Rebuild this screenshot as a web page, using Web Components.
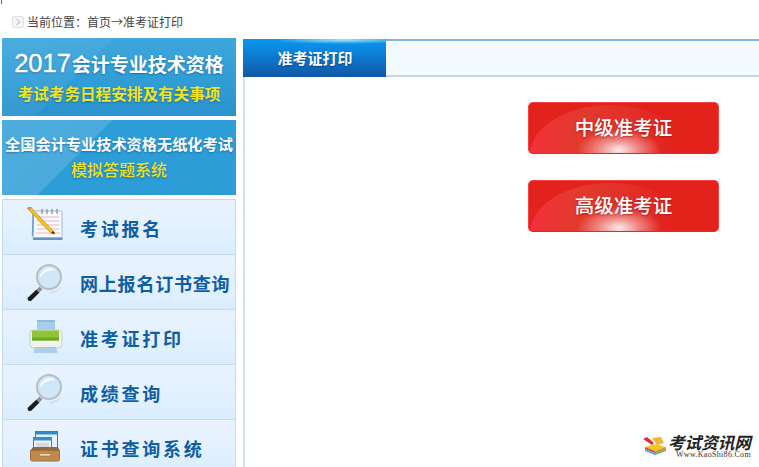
<!DOCTYPE html>
<html lang="zh"><head><meta charset="utf-8"><title>准考证打印</title>
<style>
html,body{margin:0;padding:0;height:467px;overflow:hidden;background:#fff}
body{font-family:"Noto Sans CJK SC","Liberation Sans",sans-serif}
.yr{font:400 25.500px/34px "Liberation Sans",sans-serif;margin-right:1px;-webkit-text-stroke:.35px #fff}
</style></head><body>
<app-page>
  <bread-crumb slot="crumb">当前位置：首页→准考证打印</bread-crumb>
  <side-banner slot="side" variant="a"><span slot="title"><span class="yr">2017</span>会计专业技术资格</span><span slot="sub">考试考务日程安排及有关事项</span></side-banner>
  <side-banner slot="side" variant="b"><span slot="title">全国会计专业技术资格无纸化考试</span><span slot="sub">模拟答题系统</span></side-banner>
  <side-menu slot="side">
    <menu-row icon="pad">考试报名</menu-row>
    <menu-row icon="glass" tight>网上报名订书查询</menu-row>
    <menu-row icon="printer">准考证打印</menu-row>
    <menu-row icon="glass">成绩查询</menu-row>
    <menu-row icon="tray">证书查询系统</menu-row>
  </side-menu>
  <content-panel slot="main" tab="准考证打印">
    <red-button>中级准考证</red-button>
    <red-button>高级准考证</red-button>
  </content-panel>
  <site-logo slot="logo"></site-logo>
</app-page>
<script>
function def(name, css, html){
  customElements.define(name, class extends HTMLElement{
    connectedCallback(){
      if(this.shadowRoot) return;
      const r=this.attachShadow({mode:'open'});
      r.innerHTML='<style>'+css+'</style>'+(typeof html==='function'?html(this):html);
    }
  });
}
def('app-page',`
:host{display:block;position:relative;width:759px;height:467px;overflow:hidden}
.top{height:38px;box-sizing:border-box;padding:15px 0 0 12px;position:relative}
.mark{position:absolute;left:1px;top:0;width:1px;height:4px;background:#1a6fd0}
.wrap{display:flex;height:429px}
.side{width:234px;margin-left:2px;display:flex;flex-direction:column;gap:4px;flex:none}
.main{margin-left:7px;flex:1;min-width:0}
`,`<div class="top"><i class="mark"></i><slot name="crumb"></slot></div>
<div class="wrap"><div class="side"><slot name="side"></slot></div><div class="main"><slot name="main"></slot></div></div>
<slot name="logo"></slot>`);

def('bread-crumb',`
:host{display:flex;align-items:center;gap:3px;font:12px/14px "Noto Sans CJK SC",sans-serif;color:#444;height:13px}
svg{flex:none}
`,`<svg width="12" height="12" viewBox="0 0 12 12"><rect x=".5" y=".5" width="11" height="11" rx="1.500" fill="#f6f6f6" stroke="#e0e0e0"/><path d="M4.500 3l3 3-3 3" fill="none" stroke="#cfcfcf" stroke-width="1.500"/></svg><slot></slot>`);

def('side-banner',`
:host{display:flex;flex:none;flex-direction:column;align-items:center;box-sizing:border-box;color:#fff;position:relative;overflow:hidden;background:#2f9bd6}
:host([variant=a]){height:78px;padding-top:8px;background:linear-gradient(180deg,#3ea6dc 0,#2f9cd5 60%,#2b93cf 100%)}
:host([variant=b]){height:75px;padding-top:11px;background:#2c9dd7}
.d{position:absolute;inset:0}
:host([variant=b]) .d{background:linear-gradient(135deg,rgba(255,255,255,.16) 0,rgba(255,255,255,.14) 35.500%,transparent 36%)}
:host([variant=a]) .d{background:linear-gradient(135deg,rgba(255,255,255,.07) 0,rgba(255,255,255,.05) 35.500%,transparent 36%)}
.t,.s{position:relative;white-space:nowrap;text-shadow:0 1px 2px rgba(10,70,120,.55)}
:host([variant=a]) .t{font:700 19px/34px "Noto Sans CJK SC",sans-serif;display:flex;align-items:baseline}
:host([variant=a]) .s{font:700 15.600px/22px "Noto Sans CJK SC",sans-serif;color:#f0e41c;margin-top:1px}
:host([variant=b]) .t{font:700 15.200px/24px "Noto Sans CJK SC",sans-serif}
:host([variant=b]) .s{font:500 16px/24px "Noto Sans CJK SC",sans-serif;color:#f2e21e;margin-top:2px}
`,`<i class="d"></i><div class="t"><slot name="title"></slot></div><div class="s"><slot name="sub"></slot></div>`);

def('side-menu',`:host{display:block;flex:none;border-left:1px solid #c2d9ee;border-right:1px solid #c2d9ee;border-top:1px solid #c2d9ee}`,`<slot></slot>`);

const icons={
pad:`<svg width="38" height="38" viewBox="0 0 38 38"><g transform="translate(0 -3)"><rect x="6" y="7" width="29" height="27" rx="1.500" fill="#fbfbff" stroke="#9db7d8"/><path d="M5.500 32l1-25" stroke="#5aa0dc" stroke-width="1.500"/><path d="M6 33.500h29.500v2.500H6z" fill="#5f93c8"/><path d="M10 13h22M9.500 17h23M9.500 21h23M9.500 25h23M9 29h24" stroke="#d8a8b0" stroke-width=".8"/><path d="M15 5v5M20 5v5M25 5v5M30 5v5" stroke="#8a8a8a" stroke-width="1.200"/><path d="M3 2.500L28 29l-.5 1-3.800-1.200L.5 4.500z" fill="#f4c51c" stroke="#c98a10" stroke-width=".8"/><path d="M0 4L3.500 1l2 2L2 6z" fill="#e9806a"/><path d="M24 29l3.500 1.200-1-3.500z" fill="#333"/></g></svg>`,
glass:`<svg width="38" height="38" viewBox="0 0 38 38" style="overflow:visible"><g transform="translate(-1.500 2)"><path d="M24 27c5 0 10-2 12-6-1 5-6 9-12 9z" fill="#d4dfe8" opacity=".8"/><path d="M2.500 33.500L11 25.500l3 3L6 36.500c-2 1.500-5-.5-3.500-3z" fill="#1d1d1d"/><path d="M11 26l3-3.500 3 3-3.500 3z" fill="#8a8f94"/><circle cx="23.500" cy="13" r="12" fill="#cfe7f8" stroke="#b9bdc1" stroke-width="2"/><path d="M14.500 14c0-5.500 4-9.500 9.500-10 2.500 0 4.500 .8 6 2.500-6-1.200-12 1.500-15.500 7.500z" fill="#f4fbff"/></g></svg>`,
printer:`<svg width="38" height="38" viewBox="0 0 38 38" style="overflow:visible"><g transform="translate(0 2)"><rect x="10" y="1" width="18" height="12" fill="#a6cdee"/><rect x="10" y="1" width="18" height="2" fill="#8ebbe2"/><path d="M8 27h21l1.500 7H6.500z" fill="#a9cff0"/><rect x="3" y="11" width="32" height="18" rx="3.500" fill="#f0f3ee" stroke="#c9cfc6"/><rect x="5" y="11.500" width="27" height="10" fill="#8ec435"/><rect x="5" y="18.500" width="27" height="3" fill="#6fa626"/><rect x="8" y="28" width="21" height="1" fill="#b9c2b4"/></g></svg>`,
tray:`<svg width="38" height="38" viewBox="0 0 38 38"><rect x="8.500" y="4.500" width="22" height="21" fill="#e8f2fb" stroke="#2f7cbc" stroke-width="1"/><rect x="8.500" y="4.500" width="22" height="3" fill="#2f8acb"/><rect x="6.500" y="10.500" width="18" height="17" fill="#f2f5f8" stroke="#3a80b8" stroke-width="1"/><rect x="6.500" y="10.500" width="18" height="3" fill="#3990cf"/><path d="M9 15.500h13v7H9z" fill="#d6d9dd"/><path d="M6 20h25l2 4H3z" fill="#8f6a3c"/><path d="M3.500 23.500h29v9a1.500 1.500 0 01-1.500 1.500H5a1.500 1.500 0 01-1.500-1.500z" fill="#c08a4c" stroke="#99703e"/><rect x="12.500" y="26.500" width="11" height="2.500" rx="1" fill="#f0dcc0" stroke="#8f6a3c" stroke-width=".6"/></svg>`};
def('menu-row',`
:host{display:flex;align-items:center;height:55px;box-sizing:border-box;border-bottom:1px solid #c2d9ee;background:linear-gradient(180deg,#e8f3fe 0,#e4f1fe 50%,#d9edfe 100%);position:relative}
.i{width:38px;height:38px;margin-left:24px;flex:none;margin-top:-2px}
.l{margin:1px 0 0 15px;font:700 18px/24px "Noto Sans CJK SC",sans-serif;color:#0f5ea3;letter-spacing:2.750px;white-space:nowrap}
:host([tight]) .l{letter-spacing:.8px}
`,h=>`<div class="i">${icons[h.getAttribute('icon')]}</div><div class="l"><slot></slot></div>`);

def('content-panel',`
:host{display:block;height:429px;border-left:2px solid #d4e0ee;box-sizing:border-box;position:relative}
.head{height:38px;box-sizing:border-box;margin-left:-2px;margin-top:1px;display:flex;background:#f2f9ff;border-top:2px solid #7db4e0;border-bottom:2px solid #c4d6ea}
.tab{width:143px;margin:-2px 0;height:38px;flex:none;display:flex;align-items:center;justify-content:center;box-sizing:border-box;padding-left:1px;font:700 15px/20px "Noto Sans CJK SC",sans-serif;color:#fff;background:radial-gradient(70px 4px at 70% 1px,rgba(170,235,255,.9),transparent),linear-gradient(180deg,#0a97ee 0,#0b86dc 30%,#0f67b8 75%,#1058a6 100%);text-shadow:0 1px 2px rgba(0,40,90,.6)}
.body{display:flex;flex-direction:column;gap:26px;padding:25px 0 0 283px}
`,h=>`<div class="head"><div class="tab">${h.getAttribute('tab')}</div></div><div class="body"><slot></slot></div>`);

def('red-button',`
:host{display:flex;flex:none;align-items:center;justify-content:center;width:191px;height:52px;box-sizing:border-box;border:1px solid #f8403e;border-bottom-color:#ff1c1c;border-radius:5px;color:#fff;font:500 19.500px/28px "Noto Sans CJK SC",sans-serif;text-shadow:0 1px 2px rgba(120,10,10,.5);padding-bottom:2px;background:#e3221c;overflow:hidden;position:relative}
.arc{position:absolute;left:1px;top:2px;width:160px;height:100px;border-radius:50%;background:linear-gradient(90deg,#f2303c 0,#e33a2c 30%,#e2302a 60%,#e3221c 90%)}
.glow{position:absolute;left:48px;width:84px;bottom:-18px;height:42px;background:radial-gradient(closest-side,rgba(255,255,255,.9),rgba(255,255,255,.4) 50%,rgba(255,255,255,0))}
span{position:relative}
`,`<i class="arc"></i><i class="glow"></i><span><slot></slot></span>`);

def('site-logo',`
:host{position:absolute;left:642px;top:433px;width:112px;height:34px;display:block;background:#fff}
svg{position:absolute;left:0;top:0}
.a{position:absolute;left:26px;top:1px;font:italic 700 16.600px/16px "Noto Sans CJK SC",sans-serif;color:#222;white-space:nowrap}
.b{position:absolute;left:34px;top:17px;font:8px/9px "Liberation Serif",serif;letter-spacing:.3px;color:#333;white-space:nowrap}
`,`<svg width="28" height="24" viewBox="0 0 28 24"><path d="M1 6l4-2 7 6-2 2z" fill="#d9323a"/><path d="M10 5l9-1 3 6-7 2z" fill="#f2b632"/><path d="M3 14l11-3 10 3-11 4z" fill="#f0c81e"/><path d="M3 14l10 4v2L3 16z" fill="#e0473e"/><path d="M13 18l11-4v2l-11 4z" fill="#e9803a"/><path d="M3 16l10 4v2L3 18z" fill="#4aa8e0"/><path d="M13 20l11-4v2l-11 4z" fill="#5cb85c"/></svg><div class="a">考试资讯网</div><div class="b">Www.KaoShi86.Com</div>`);
</script>
</body></html>
